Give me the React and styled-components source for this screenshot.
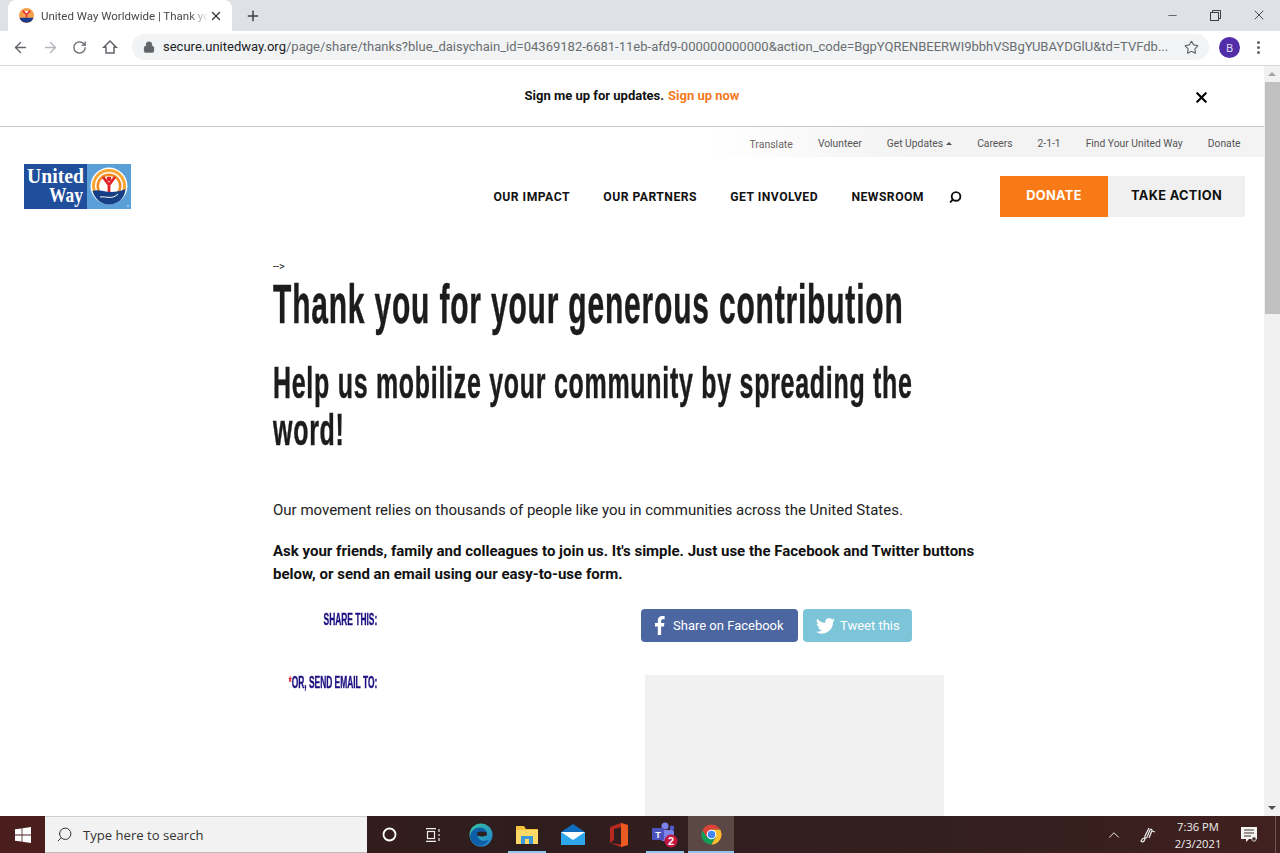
import React from 'react';
import styled, { createGlobalStyle } from 'styled-components';
import { ArrowLeft, ArrowRight, RotateCw, Lock, Star, Plus, X, Minus, Search, ChevronUp } from 'lucide-react';

const Global = createGlobalStyle`
  html, body { margin: 0; padding: 0; background: #fff; overflow: hidden; }
  * { box-sizing: border-box; }
`;
const Screen = styled.div`
  width: 1280px; height: 853px; display: flex; flex-direction: column; overflow: hidden;
  font-family: Roboto, "Liberation Sans", sans-serif; color: #111;
`;
const TabStrip = styled.div`
  height: 31px; flex: none; background: #dee1e6; display: flex; align-items: flex-end; padding-left: 8px;
`;
const Tab = styled.div`
  width: 224px; height: 31px; background: #fff; border-radius: 8px 8px 0 0; display: flex; align-items: center;
  padding: 0 9px 0 11px; font: 11.5px/14px Roboto, "Liberation Sans", sans-serif; color: #45484c;
`;
const TabTitle = styled.span`
  flex: 1; margin-left: 7px; white-space: nowrap; overflow: hidden;
  -webkit-mask-image: linear-gradient(to right, #000 88%, transparent);
  mask-image: linear-gradient(to right, #000 88%, transparent);
`;
const NewTab = styled.div`
  width: 42px; height: 30px; display: flex; align-items: center; justify-content: center; color: #3c4043; padding-bottom: 1px;
`;
const WindowButtons = styled.div`
  margin-left: auto; height: 30px; display: flex; align-items: flex-start; color: #3c4043;
`;
const WinButton = styled.div`
  width: 43px; height: 28px; display: flex; align-items: center; justify-content: center;
`;
const Toolbar = styled.div`
  height: 35px; flex: none; background: #fff; border-bottom: 1px solid #d6d7d9; display: flex; align-items: center;
  padding: 0 12px 2px 12px; color: #5f6368;
`;
const NavIcon = styled.div`
  width: 30px; height: 24px; display: flex; align-items: center; justify-content: flex-start;
  color: ${p => p.$dim ? '#b3b6ba' : '#5f6368'};
`;
const Omnibox = styled.div`
  width: 1077px; height: 26px; background: #f1f3f4; border-radius: 13px; display: flex; align-items: center;
  padding: 0 10px 0 11px; font: 13.03px/16px Roboto, "Liberation Sans", sans-serif; color: #6a6d70;
`;
const UrlText = styled.span`
  flex: 1; margin-left: 8px; white-space: nowrap; overflow: hidden;
  b { font-weight: 400; color: #202124; }
`;
const Avatar = styled.div`
  width: 21px; height: 21px; border-radius: 50%; background: #512da8; color: #e8e4f4; margin-left: 10px;
  font: 11px/21px "Open Sans", sans-serif; text-align: center; flex: none;
`;
const Dots = styled.div`
  width: 3px; margin-left: 17px; display: flex; flex-direction: column; gap: 2px;
  i { width: 3px; height: 3px; border-radius: 50%; background: #5f6368; display: block; }
`;
const Viewport = styled.div`
  flex: 1; min-height: 0; display: flex;
`;
const Page = styled.div`
  flex: 1; min-width: 0; overflow: hidden; background: #fff;
`;
const ScrollBar = styled.div`
  width: 16px; flex: none; background: #f1f1f1; display: flex; flex-direction: column; align-items: center;
`;
const ScrollCap = styled.div`
  height: 16px; flex: none; width: 100%; display: flex; align-items: center; justify-content: center;
  &::before { content: ''; border-left: 4px solid transparent; border-right: 4px solid transparent;
    ${p => p.$down ? 'border-top: 4px solid #505050;' : 'border-bottom: 4px solid #a3a3a3;'} }
`;
const ScrollThumb = styled.div`
  width: 15px; height: 232px; background: #c1c1c1; flex: none;
`;
const ScrollGap = styled.div`flex: 1;`;
const SignupBar = styled.div`
  height: 61px; border-bottom: 1px solid #c9c9c9; display: flex; align-items: center; justify-content: center;
  font-size: 13px; font-weight: 700; padding-bottom: 2px; position: relative;
  a { color: #f47a1f; margin-left: 4px; }
`;
const CloseBtn = styled.div`
  position: absolute; left: 1193px; top: 23px; width: 17px; height: 17px; color: #000; display: flex;
`;
const UtilityBar = styled.div`
  height: 30px; background: linear-gradient(to right, #fff 0, #fff 56%, #f3f3f3 72%, #f3f3f3 100%); display: flex; align-items: center; justify-content: flex-end;
  padding: 2px 23.5px 0 0; gap: 25px; font-size: 10.3px; color: #555;
`;
const UtilLink = styled.span`
  white-space: nowrap; display: flex; align-items: center; gap: 3px;
  ${p => p.$low && 'position: relative; top: 1px; color: #6b6463; font-size: 10.5px;'}
  &::after { ${p => p.$caret ? "content: ''; border-left: 3.5px solid transparent; border-right: 3.5px solid transparent; border-bottom: 3.5px solid #555;" : ''} }
`;
const Masthead = styled.div`
  height: 72px; display: flex; padding: 7px 19px 0 24px;
`;
const Logo = styled.svg`
  width: 107px; height: 45px; flex: none; display: block;
`;
const MainNav = styled.nav`
  margin-left: auto; display: flex; align-items: center; height: 41px; margin-top: 12px;
`;
const NavItem = styled.span`
  font-size: 12.2px; font-weight: 700; letter-spacing: .46px; color: #111; margin-right: 33.4px; white-space: nowrap;
  &:last-of-type { margin-right: 25px; }
`;
const SearchIcon = styled.div`
  width: 13px; height: 14px; color: #111; display: flex; margin-right: 38px; transform: scaleX(-1);
`;
const CTA = styled.div`
  height: 41px; width: ${p => p.$w}px; background: ${p => p.$primary ? '#f87a17' : '#f0f0f0'}; color: ${p => p.$primary ? '#fff' : '#111'};
  display: flex; align-items: center; justify-content: center; font-size: 12.8px; font-weight: 700; letter-spacing: .35px; padding-bottom: 3px;
  font-family: Inter, Roboto, sans-serif;
`;
const Article = styled.main`
  width: 710px; margin-left: 273px; padding-top: 31px;
`;
const Stray = styled.div`
  font-size: 11px; line-height: 13px; height: 13px; color: #111;
`;
const Squeeze = styled.div`
  font-family: "Liberation Sans", Arial, sans-serif; font-weight: 700; color: #1c1c1c; white-space: nowrap; transform-origin: left top;
  transform: scaleX(${p => p.$x}); -webkit-text-stroke: .5px #1c1c1c;
`;
const H1 = styled(Squeeze).attrs({ as: 'h1' })`
  font-size: 55px; line-height: 50px; margin: 6px 0 0; height: 50px; letter-spacing: 1.5px;
`;
const H2 = styled(Squeeze).attrs({ as: 'h2' })`
  font-size: 45px; line-height: 47px; margin: 30px 0 0; height: 94px; letter-spacing: 1.3px;
`;
const Lead = styled.p`
  font-size: 15px; line-height: 22px; margin: 46px 0 0; color: #222;
`;
const Strong = styled.p`
  font-size: 15px; line-height: 23px; margin: 19px 0 0; font-weight: 700; color: #111; width: 710px;
`;
const ShareRow = styled.div`
  display: flex; margin-top: 23px; height: 33px;
`;
const FormLabel = styled.div`
  width: 104px; flex: none; display: flex; justify-content: flex-end; font-family: "Liberation Sans", sans-serif; font-weight: 700; color: #1d1080;
  font-size: 16px; line-height: 16px; white-space: nowrap; padding-top: ${p => p.$top}px; -webkit-text-stroke: .4px #1d1080;
  span { display: block; flex: none; transform: scaleX(.525); transform-origin: right center; }
  em { color: #e0222c; font-style: normal; -webkit-text-stroke: 0; }
`;
const ShareButtons = styled.div`
  margin-left: 264px; display: flex; gap: 5px;
`;
const ShareBtn = styled.div`
  height: 33px; width: ${p => p.$w}px; border-radius: 4px; background: ${p => p.$bg}; color: #fff; display: flex; align-items: center;
  font-size: 13px; padding-left: ${p => p.$pl}px; gap: ${p => p.$gap}px;
`;
const EmailRow = styled.div`
  display: flex; margin-top: 33px;
`;
const EmailBox = styled.div`
  width: 299px; height: 160px; background: #f1f1f1; margin-left: 268px;
`;
const Taskbar = styled.div`
  height: 37px; flex: none; display: flex; align-items: stretch; background: linear-gradient(to right, #3f1c1b 0, #2f1d1d 40%, #351f1f 80%, #41211f 100%); color: #fff;
`;
const StartBtn = styled.div`
  width: 45px; display: flex; align-items: center; justify-content: center; background: #4a1e1c;
`;
const SearchBox = styled.div`
  width: 322px; background: #f2f2f2; color: #333; display: flex; align-items: center; font: 13.1px "Open Sans", "Liberation Sans", sans-serif; padding-left: 11px; gap: 10px;
  border-top: 1px solid #cfcfcf; border-bottom: 1px solid #bdbdbd;
`;
const TaskSlot = styled.div`
  width: ${p => p.$w || 46}px; display: flex; align-items: center; justify-content: center; position: relative;
  background: ${p => p.$active ? '#5b4744' : 'transparent'};
  ${p => p.$open && `&::after { content: ''; position: absolute; left: ${p.$active ? 0 : 4}px; right: ${p.$active ? 0 : 4}px; bottom: 0; height: 2px; background: #8fc6ee; }`}
`;
const Tray = styled.div`
  margin-left: auto; display: flex; align-items: center; color: #eee; padding-right: 13px; position: relative;
  &::after { content: ''; position: absolute; right: 4px; top: 0; bottom: 0; width: 1px; background: #6a5553; }
`;
const Clock = styled.div`
  width: 66px; text-align: center; font: 11.2px/17px "Open Sans", "Liberation Sans", sans-serif; color: #eee;
`;
const TrayIcon = styled.div`
  width: ${p => p.$w}px; display: flex; justify-content: center; align-items: center; color: #eee;
`;

const Favicon = () => (
  <svg width="15" height="15" viewBox="0 0 16 16"><circle cx="8" cy="8" r="8" fill="#f6a04d"/><path d="M.5 10.5h15A8 8 0 0 1 .5 10.5z" fill="#1a3c8c"/><circle cx="8" cy="5" r="2" fill="#fff"/><path d="M4 3l4 4 4-4M8 7v3" stroke="#d8232a" strokeWidth="1.5" fill="none"/></svg>
);
const WordMark = () => (
  <Logo viewBox="0 0 107 45">
    <rect width="64" height="45" fill="#1f4e9c"/>
    <rect x="63" width="44" height="45" fill="#5a9fd8"/>
    <text x="3" y="19" fontFamily="Liberation Serif, serif" fontWeight="700" fontSize="21" fill="#fff" textLength="57" lengthAdjust="spacingAndGlyphs">United</text>
    <text x="25" y="38" fontFamily="Liberation Serif, serif" fontWeight="700" fontSize="21" fill="#fff" textLength="34" lengthAdjust="spacingAndGlyphs">Way</text>
    <circle cx="85" cy="22" r="18.5" fill="#fff"/>
    <circle cx="85" cy="22" r="17" fill="#f9a532"/>
    <circle cx="85" cy="22" r="14" fill="#fff"/>
    <circle cx="85" cy="22" r="12.5" fill="#f58a1f"/>
    <circle cx="85" cy="22" r="10" fill="#fff"/>
    <circle cx="85" cy="15" r="2.4" fill="#e2242b"/>
    <path d="M79 13 L85 21 L91 13 M85 20 L85 29" stroke="#e2242b" strokeWidth="2.8" fill="none"/>
    <path d="M68.5 27 C76 24 85 32 101.5 25 C101 34 94 40.5 85 40.5 C77 40.5 71 35 68.5 27z" fill="#173f85"/>
    <path d="M76 33 C82 32 88 36 94 30" stroke="#fff" strokeWidth="1" fill="none"/>
    <circle cx="104" cy="42" r=".8" fill="#e8f1fa"/>
  </Logo>
);
const HomeIcon = () => (
  <svg width="16" height="16" viewBox="0 0 16 16" fill="none" stroke="#5f6368" strokeWidth="1.5" strokeLinejoin="miter"><path d="M8 2 1.8 8.2H4V14h8V8.2h2.2z"/></svg>
);
const WinLogo = () => (
  <svg width="16" height="16" viewBox="0 0 16 16" fill="#fff"><path d="M0 2.3 6.6 1.4v6.1H0zM7.4 1.3 16 0v7.5H7.4zM0 8.4h6.6v6.2L0 13.7zM7.4 8.4H16V16l-8.6-1.3z"/></svg>
);
const Edge = () => (
  <svg width="24" height="24" viewBox="0 0 24 24"><defs><linearGradient id="eg" x1="0" y1="0" x2="1" y2="1"><stop offset="0" stopColor="#38c6a0"/><stop offset="1" stopColor="#1f7fd0"/></linearGradient></defs><circle cx="12" cy="12" r="11.5" fill="url(#eg)"/><path d="M1 13C2 6 9 3 14 5c4 2 5 6 3 8H9c0 4 5 6 11 4-3 5-9 7-13 5C3 20 1 17 1 13z" fill="#0f5ea8"/><ellipse cx="13" cy="11" rx="5" ry="2.4" fill="#2a2020"/></svg>
);
const Folder = () => (
  <svg width="22" height="20" viewBox="0 0 22 20"><path d="M0 1h8l2 3h12v15H0z" fill="#f2c23e"/><rect y="5" width="22" height="14" fill="#fcd967"/><rect x="5" y="11" width="12" height="8" fill="#3a9ad9"/><rect x="9" y="14" width="4" height="5" fill="#fcd967"/></svg>
);
const Mail = () => (
  <svg width="24" height="21" viewBox="0 0 24 21"><path d="M0 8 12 0l12 8v13H0z" fill="#0f6cbd"/><path d="M0 8h24v13H0z" fill="#2ea6ec"/><path d="M0 8l12 8 12-8" fill="#fff"/></svg>
);
const Office = () => (
  <svg width="18" height="24" viewBox="0 0 18 24"><path d="M0 4 11 0l7 2v20l-7 2-11-4 11 1.5V4L4 6v11l-4 3z" fill="#b7281e"/><path d="M11 0l7 2v20l-7 2z" fill="#eb5a23"/></svg>
);
const Teams = () => (
  <svg width="27" height="26" viewBox="0 0 27 26"><circle cx="13" cy="4" r="3.5" fill="#7b83eb"/><circle cx="20" cy="6" r="2.4" fill="#5059c9"/><rect x="9" y="8" width="13" height="11" rx="2" fill="#7b83eb"/><rect x="0" y="6" width="12" height="12" rx="1" fill="#4b53bc"/><text x="6" y="15.5" fontFamily="Liberation Sans" fontWeight="700" fontSize="9" fill="#fff" textAnchor="middle">T</text><circle cx="19" cy="19" r="6.5" fill="#c4163f"/><text x="19" y="23" fontFamily="Liberation Sans" fontWeight="700" fontSize="11" fill="#fff" textAnchor="middle">2</text></svg>
);
const ChromeIcon = () => (
  <svg width="21" height="21" viewBox="0 0 48 48"><circle cx="24" cy="24" r="23" fill="#db4437"/><path d="M44 13H24l-10 18L3 14A23 23 0 0 0 24 47z" fill="#0f9d58"/><path d="M24 47l10-17L24 13h20a23 23 0 0 1-20 34z" fill="#fbc02d"/><circle cx="24" cy="24" r="11" fill="#fff"/><circle cx="24" cy="24" r="8.5" fill="#4285f4"/></svg>
);
const Facebook = () => (
  <svg width="11" height="19" viewBox="0 0 11 20" fill="#fff"><path d="M7.2 20V11h3l.5-3.6H7.2V5.2c0-1 .3-1.8 1.8-1.8h1.9V.2C10.5.1 9.5 0 8.3 0 5.6 0 3.7 1.6 3.7 4.7v2.7H.7V11h3v9z"/></svg>
);
const Bird = () => (
  <svg width="19" height="16" viewBox="0 0 24 20" fill="#fff"><path d="M24 2.4a9.8 9.8 0 0 1-2.8.8A4.9 4.9 0 0 0 23.3.5a9.8 9.8 0 0 1-3.1 1.2 4.9 4.9 0 0 0-8.4 4.5A14 14 0 0 1 1.7.9a4.9 4.9 0 0 0 1.5 6.6 4.9 4.9 0 0 1-2.2-.6c0 2.4 1.7 4.4 3.9 4.9a4.9 4.9 0 0 1-2.2.1 4.9 4.9 0 0 0 4.6 3.4A9.9 9.9 0 0 1 0 17.3 14 14 0 0 0 21.5 4.9 10 10 0 0 0 24 2.4z"/></svg>
);
const Pen = () => (
  <svg width="17" height="17" viewBox="0 0 17 17" fill="none" stroke="#eee" strokeWidth="1.2"><path d="M9 2 5 10c-1 2 1 3 2 1l3-7c.6-1.4 2.4-.6 1.9.8L9 12"/><path d="M1 15c1-2 2-3 3-3s1 2 0 3-2 1-3 0z"/><path d="M12 5l3 1"/></svg>
);
const Notes = () => (
  <svg width="17" height="16" viewBox="0 0 17 16"><path d="M0 0h16v12H8l-3 3v-3H0z" fill="#f4f4f4"/><path d="M3 3h10M3 6h10M3 9h7" stroke="#43302e" strokeWidth="1"/><circle cx="13" cy="12" r="2.2" fill="#43302e" stroke="#f4f4f4" strokeWidth=".8"/></svg>
);

export default function App() {
  return (
    <Screen>
      <Global />
      <TabStrip>
        <Tab>
          <Favicon />
          <TabTitle>United Way Worldwide | Thank you for your</TabTitle>
          <X size={14} strokeWidth={2.4} color="#3c4043" />
        </Tab>
        <NewTab><Plus size={16} strokeWidth={2.2} /></NewTab>
        <WindowButtons>
          <WinButton><Minus size={13} strokeWidth={1.4} /></WinButton>
          <WinButton>
            <svg width="11" height="11" viewBox="0 0 11 11" fill="none" stroke="#3c4043"><rect x=".5" y="2.5" width="8" height="8"/><path d="M2.5 2.5V.5h8v8h-2"/></svg>
          </WinButton>
          <WinButton><X size={16} strokeWidth={1.4} /></WinButton>
        </WindowButtons>
      </TabStrip>
      <Toolbar>
        <NavIcon><ArrowLeft size={17} strokeWidth={1.9} /></NavIcon>
        <NavIcon $dim><ArrowRight size={17} strokeWidth={1.9} /></NavIcon>
        <NavIcon><RotateCw size={15} strokeWidth={2} /></NavIcon>
        <NavIcon><HomeIcon /></NavIcon>
        <Omnibox>
          <Lock size={12} strokeWidth={2.5} fill="#5f6368" />
          <UrlText><b>secure.unitedway.org</b>/page/share/thanks?blue_daisychain_id=04369182-6681-11eb-afd9-000000000000&amp;action_code=BgpYQRENBEERWI9bbhVSBgYUBAYDGlU&amp;td=TVFdb...</UrlText>
          <Star size={15} strokeWidth={1.8} color="#5f6368" />
        </Omnibox>
        <Avatar>B</Avatar>
        <Dots><i /><i /><i /></Dots>
      </Toolbar>
      <Viewport>
        <Page>
          <SignupBar>
            Sign me up for updates. <a>Sign up now</a>
            <CloseBtn><X size={17} strokeWidth={3} /></CloseBtn>
          </SignupBar>
          <UtilityBar>
            <UtilLink $low>Translate</UtilLink>
            <UtilLink>Volunteer</UtilLink>
            <UtilLink $caret>Get Updates</UtilLink>
            <UtilLink>Careers</UtilLink>
            <UtilLink>2-1-1</UtilLink>
            <UtilLink>Find Your United Way</UtilLink>
            <UtilLink>Donate</UtilLink>
          </UtilityBar>
          <Masthead>
            <WordMark />
            <MainNav>
              <NavItem>OUR IMPACT</NavItem>
              <NavItem>OUR PARTNERS</NavItem>
              <NavItem>GET INVOLVED</NavItem>
              <NavItem>NEWSROOM</NavItem>
              <SearchIcon><Search size={14} strokeWidth={3.5} /></SearchIcon>
              <CTA $primary $w={108}>DONATE</CTA>
              <CTA $w={137}>TAKE ACTION</CTA>
            </MainNav>
          </Masthead>
          <Article>
            <Stray>--&gt;</Stray>
            <H1 $x={0.545}>Thank you for your generous contribution</H1>
            <H2 $x={0.555}>Help us mobilize your community by spreading the<br />word!</H2>
            <Lead>Our movement relies on thousands of people like you in communities across the United States.</Lead>
            <Strong>Ask your friends, family and colleagues to join us. It's simple. Just use the Facebook and Twitter buttons below, or send an email using our easy-to-use form.</Strong>
            <ShareRow>
              <FormLabel $top={3}><span>SHARE THIS:</span></FormLabel>
              <ShareButtons>
                <ShareBtn $w={157} $bg="#4b66a0" $pl={13} $gap={8}><Facebook />Share on Facebook</ShareBtn>
                <ShareBtn $w={109} $bg="#7cc4d8" $pl={13} $gap={5}><Bird />Tweet this</ShareBtn>
              </ShareButtons>
            </ShareRow>
            <EmailRow>
              <FormLabel $top={0}><span><em>*</em>OR, SEND EMAIL TO:</span></FormLabel>
              <EmailBox />
            </EmailRow>
          </Article>
        </Page>
        <ScrollBar>
          <ScrollCap />
          <ScrollThumb />
          <ScrollGap />
          <ScrollCap $down />
        </ScrollBar>
      </Viewport>
      <Taskbar>
        <StartBtn><WinLogo /></StartBtn>
        <SearchBox>
          <Search size={17} strokeWidth={1.4} style={{ transform: 'scaleX(-1)' }} />
          Type here to search
        </SearchBox>
        <TaskSlot $w={44}>
          <svg width="15" height="15" viewBox="0 0 15 15" fill="none" stroke="#fff" strokeWidth="1.8"><circle cx="7.5" cy="7.5" r="6"/></svg>
        </TaskSlot>
        <TaskSlot $w={46}>
          <svg width="16" height="14" viewBox="0 0 16 14" fill="none" stroke="#eee" strokeWidth="1.2"><path d="M0 .6h10M0 13.4h10"/><rect x="1.5" y="3.5" width="7" height="7"/><path d="M13 1v3M13 6v2M13 10v3"/></svg>
        </TaskSlot>
        <TaskSlot $w={47}><Edge /></TaskSlot>
        <TaskSlot $w={46} $open><Folder /></TaskSlot>
        <TaskSlot $w={46}><Mail /></TaskSlot>
        <TaskSlot $w={46}><Office /></TaskSlot>
        <TaskSlot $w={46} $open><Teams /></TaskSlot>
        <TaskSlot $w={46} $open $active><ChromeIcon /></TaskSlot>
        <Tray>
          <TrayIcon $w={34}><ChevronUp size={18} strokeWidth={1.3} /></TrayIcon>
          <TrayIcon $w={34}><Pen /></TrayIcon>
          <Clock>7:36 PM<br />2/3/2021</Clock>
          <TrayIcon $w={36}><Notes /></TrayIcon>
        </Tray>
      </Taskbar>
    </Screen>
  );
}
